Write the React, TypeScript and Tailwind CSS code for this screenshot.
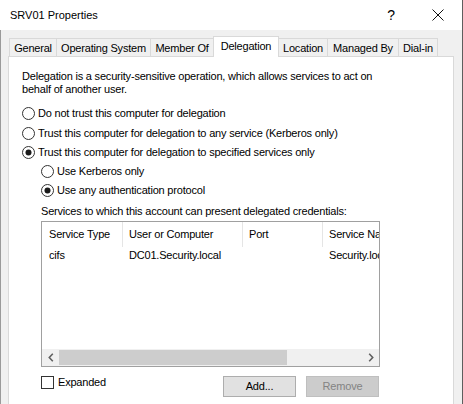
import React from "react"

const tabs = [
  { text: "General", w: "w-[48px]" },
  { text: "Operating System", w: "w-[95px]" },
  { text: "Member Of", w: "w-[64px]" },
  { text: "Delegation", w: "w-[66px]", active: true },
  { text: "Location", w: "w-[50px]" },
  { text: "Managed By", w: "w-[72px]" },
  { text: "Dial-in", w: "w-[40px]" },
]

function Radio({ checked }: { checked?: boolean }) {
  return (
    <svg width="13" height="13" viewBox="0 0 13 13" className="shrink-0">
      <circle cx="6.5" cy="6.5" r="6" fill="white" stroke="#333333" />
      {checked && <circle cx="6.5" cy="6.5" r="3" fill="#1a1a1a" />}
    </svg>
  )
}

function RadioRow({ label, checked, h }: { label: string; checked?: boolean; h: string }) {
  return (
    <div className={`flex items-center gap-[3px] ${h}`}>
      <Radio checked={checked} />
      <span>{label}</span>
    </div>
  )
}

export default function App() {
  return (
    <div className="w-[463px] h-[404px] overflow-hidden bg-[#f0f0f0] border-r border-[#5e5e5e] font-['Liberation_Sans',Arial,sans-serif] text-[11px] tracking-[-0.2px] text-black leading-[13px]">
      {/* Title bar */}
      <div className="h-[30px] bg-white flex items-center pl-[10px]">
        <span className="tracking-normal">SRV01 Properties</span>
        <div className="ml-auto flex items-center">
          <span className="text-[14px] w-[12px] mr-[35px] text-center">?</span>
          <svg width="12" height="12" viewBox="0 0 12 12" className="mr-[18px]">
            <path d="M0.5 0.5 L11.5 11.5 M11.5 0.5 L0.5 11.5" stroke="#111" strokeWidth="1" />
          </svg>
        </div>
      </div>

      {/* Body */}
      <div className="h-[374px] border-l border-[#9a9a9a] pl-[7px] pt-[6px]">
        {/* Tab strip */}
        <div className="h-[20px] flex items-end pl-[1px]">
          {tabs.map((t, i) =>
            t.active ? (
              <div
                key={t.text}
                className={`${t.w} h-[21px] -mb-px relative z-10 bg-white border border-b-0 border-[#d9d9d9] flex items-start justify-center pt-[3px] ${i > 0 ? "-ml-px" : ""}`}
              >
                {t.text}
              </div>
            ) : (
              <div
                key={t.text}
                className={`${t.w} h-[18px] bg-[#f0f0f0] border border-b-0 border-[#d9d9d9] flex items-center justify-center pt-[1px] ${i > 0 ? "-ml-px" : ""}`}
              >
                {t.text}
              </div>
            )
          )}
        </div>

        {/* Panel */}
        <div className="w-[446px] h-[400px] bg-white border border-[#d9d9d9] pl-[13px] pt-[13px]">
          <p>
            Delegation is a security-sensitive operation, which allows services to act on
            <br />
            behalf of another user.
          </p>

          <div className="mt-[7px] flex flex-col">
            <RadioRow h="h-[20px]" label="Do not trust this computer for delegation" />
            <RadioRow h="h-[20px]" label="Trust this computer for delegation to any service (Kerberos only)" />
            <RadioRow h="h-[19px]" checked label="Trust this computer for delegation to specified services only" />
            <div className="pl-[19px] flex flex-col">
              <RadioRow h="h-[19px]" label="Use Kerberos only" />
              <RadioRow h="h-[19px]" checked label="Use any authentication protocol" />

              <div className="mt-[4px] leading-[14px]">Services to which this account can present delegated credentials:</div>

              {/* List view */}
              <div className="mt-[3px] w-[339px] h-[146px] border border-[#a0a0a0] bg-white flex flex-col overflow-hidden">
                <div className="h-[25px] flex shrink-0 whitespace-nowrap">
                  <div className="w-[81px] pl-[7px] border-r border-[#e5e5e5] flex items-center">Service Type</div>
                  <div className="w-[120px] pl-[6px] border-r border-[#e5e5e5] flex items-center">User or Computer</div>
                  <div className="w-[80px] pl-[6px] border-r border-[#e5e5e5] flex items-center">Port</div>
                  <div className="flex-1 pl-[6px] flex items-center overflow-hidden">Service Name</div>
                </div>
                <div className="flex-1 whitespace-nowrap">
                  <div className="h-[17px] flex">
                    <div className="w-[81px] pl-[7px] flex items-center">cifs</div>
                    <div className="w-[120px] pl-[6px] flex items-center">DC01.Security.local</div>
                    <div className="w-[80px] pl-[6px] flex items-center"></div>
                    <div className="flex-1 pl-[6px] flex items-center overflow-hidden">Security.local</div>
                  </div>
                </div>
                {/* Horizontal scrollbar */}
                <div className="h-[17px] bg-[#f0f0f0] flex shrink-0">
                  <div className="w-[17px] flex items-center justify-center">
                    <svg width="6" height="9" viewBox="0 0 6 9">
                      <path d="M4.8 0.8 L1.3 4.5 L4.8 8.2" fill="none" stroke="#606060" strokeWidth="1.6" />
                    </svg>
                  </div>
                  <div className="flex-1 flex py-[1px]">
                    <div className="w-[228px] bg-[#cdcdcd]" />
                  </div>
                  <div className="w-[17px] flex items-center justify-center">
                    <svg width="6" height="9" viewBox="0 0 6 9">
                      <path d="M1.2 0.8 L4.7 4.5 L1.2 8.2" fill="none" stroke="#606060" strokeWidth="1.6" />
                    </svg>
                  </div>
                </div>
              </div>

              {/* Bottom row */}
              <div className="mt-[9px] w-[339px] flex items-start">
                <div className="flex items-center gap-[4px]">
                  <div className="w-[13px] h-[13px] border border-[#333333] bg-white" />
                  <span>Expanded</span>
                </div>
                <div className="ml-auto flex gap-[10px] mr-[1px]">
                  <button className="w-[73px] h-[21px] bg-[#e1e1e1] border border-[#adadad] text-black">Add...</button>
                  <button className="w-[73px] h-[21px] bg-[#cccccc] border border-[#bfbfbf] text-[#838383]">Remove</button>
                </div>
              </div>
            </div>
          </div>
        </div>
      </div>
    </div>
  )
}
